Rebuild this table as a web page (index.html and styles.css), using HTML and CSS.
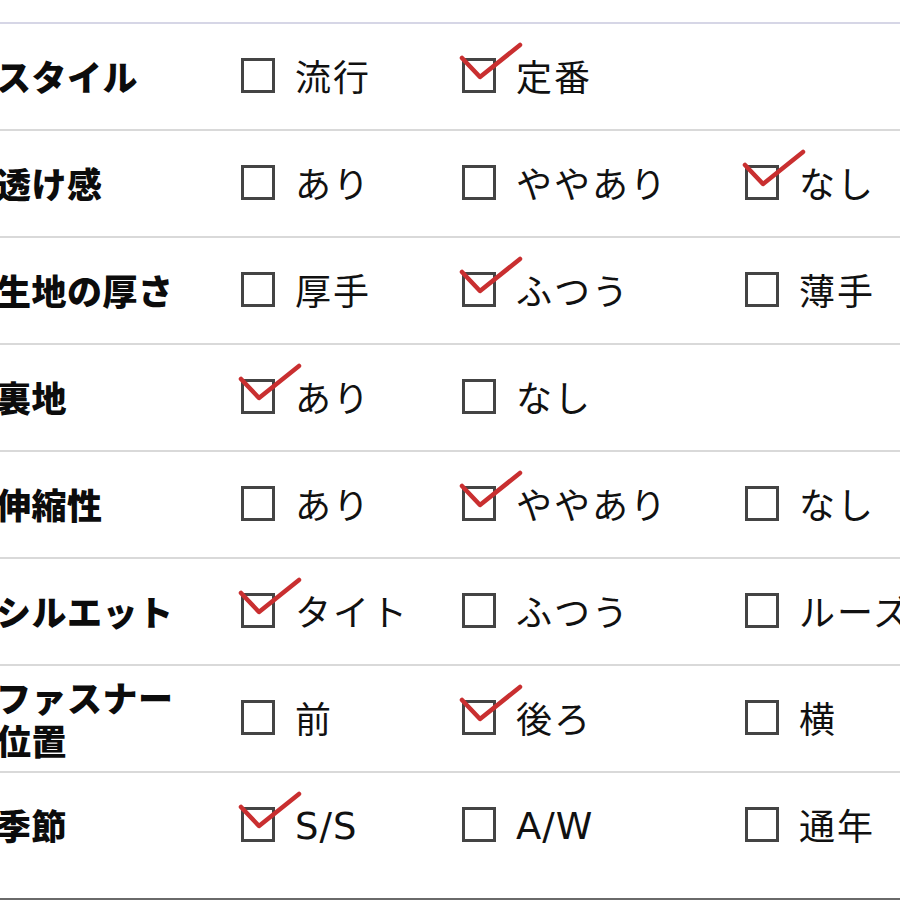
FILE: index.html
```html
<!DOCTYPE html>
<html lang="ja">
<head>
<meta charset="utf-8">
<link rel="stylesheet" href="styles.css">
</head>
<body>
<div class="spec">
  <div class="row">
    <div class="label">スタイル</div>
    <div class="opt"><span class="box"></span><span class="txt">流行</span></div>
    <div class="opt"><span class="box on"><svg class="check" viewBox="0 0 66 42" width="66" height="42"><path d="M4 18 L22 37 L62 5"/></svg></span><span class="txt">定番</span></div>
    <div class="opt"></div>
  </div>
  <div class="row">
    <div class="label">透け感</div>
    <div class="opt"><span class="box"></span><span class="txt">あり</span></div>
    <div class="opt"><span class="box"></span><span class="txt">ややあり</span></div>
    <div class="opt"><span class="box on"><svg class="check" viewBox="0 0 66 42" width="66" height="42"><path d="M4 18 L22 37 L62 5"/></svg></span><span class="txt">なし</span></div>
  </div>
  <div class="row">
    <div class="label">生地の厚さ</div>
    <div class="opt"><span class="box"></span><span class="txt">厚手</span></div>
    <div class="opt"><span class="box on"><svg class="check" viewBox="0 0 66 42" width="66" height="42"><path d="M4 18 L22 37 L62 5"/></svg></span><span class="txt">ふつう</span></div>
    <div class="opt"><span class="box"></span><span class="txt">薄手</span></div>
  </div>
  <div class="row">
    <div class="label">裏地</div>
    <div class="opt"><span class="box on"><svg class="check" viewBox="0 0 66 42" width="66" height="42"><path d="M4 18 L22 37 L62 5"/></svg></span><span class="txt">あり</span></div>
    <div class="opt"><span class="box"></span><span class="txt">なし</span></div>
    <div class="opt"></div>
  </div>
  <div class="row">
    <div class="label">伸縮性</div>
    <div class="opt"><span class="box"></span><span class="txt">あり</span></div>
    <div class="opt"><span class="box on"><svg class="check" viewBox="0 0 66 42" width="66" height="42"><path d="M4 18 L22 37 L62 5"/></svg></span><span class="txt">ややあり</span></div>
    <div class="opt"><span class="box"></span><span class="txt">なし</span></div>
  </div>
  <div class="row">
    <div class="label">シルエット</div>
    <div class="opt"><span class="box on"><svg class="check" viewBox="0 0 66 42" width="66" height="42"><path d="M4 18 L22 37 L62 5"/></svg></span><span class="txt">タイト</span></div>
    <div class="opt"><span class="box"></span><span class="txt">ふつう</span></div>
    <div class="opt"><span class="box"></span><span class="txt">ルーズ</span></div>
  </div>
  <div class="row">
    <div class="label two">ファスナー<br>位置</div>
    <div class="opt"><span class="box"></span><span class="txt">前</span></div>
    <div class="opt"><span class="box on"><svg class="check" viewBox="0 0 66 42" width="66" height="42"><path d="M4 18 L22 37 L62 5"/></svg></span><span class="txt">後ろ</span></div>
    <div class="opt"><span class="box"></span><span class="txt">横</span></div>
  </div>
  <div class="row last">
    <div class="label">季節</div>
    <div class="opt"><span class="box on"><svg class="check" viewBox="0 0 66 42" width="66" height="42"><path d="M4 18 L22 37 L62 5"/></svg></span><span class="txt lat">S/S</span></div>
    <div class="opt"><span class="box"></span><span class="txt lat">A/W</span></div>
    <div class="opt"><span class="box"></span><span class="txt">通年</span></div>
  </div>
</div>
</body>
</html>
```

FILE: styles.css
```css
html, body {
  margin: 0;
  padding: 0;
  background: #ffffff;
  overflow: hidden;
}

body {
  font-family: "Noto Sans CJK JP", "DejaVu Sans", sans-serif;
  color: #111111;
}

.spec {
  margin-top: 22px;
  border-top: 2px solid #d6d6e6;
  border-bottom: 2px solid #6a6a6a;
  padding-bottom: 20px;
  width: 900px;
}

.row {
  display: grid;
  grid-template-columns: 241px 221px 283px 155px;
  align-items: center;
  height: 105px;
  border-bottom: 2px solid #d9d9d9;
}

.row.last {
  border-bottom: none;
}

.label {
  margin-left: -4px;
  margin-bottom: 2px;
  font-size: 35px;
  font-weight: 900;
  line-height: 43px;
  white-space: nowrap;
  letter-spacing: 0.5px;
  color: #0c0c0c;
}

.opt {
  display: flex;
  align-items: center;
  gap: 20px;
  white-space: nowrap;
}

.box {
  position: relative;
  box-sizing: border-box;
  width: 34px;
  height: 35px;
  border: 3px solid #444444;
  flex: none;
  margin-bottom: 2px;
}

.check {
  position: absolute;
  left: -7px;
  top: -21px;
  overflow: visible;
}

.check path {
  fill: none;
  stroke: #c92f30;
  stroke-width: 4.5;
  stroke-linecap: round;
  stroke-linejoin: round;
}

.txt {
  font-size: 36px;
  line-height: 40px;
  font-weight: 400;
  letter-spacing: 2px;
  margin-bottom: 3px;
}

.txt.lat {
  font-family: "DejaVu Sans", sans-serif;
  font-size: 37px;
  letter-spacing: 1px;
  margin-bottom: 0;
  margin-top: 3px;
}
```
